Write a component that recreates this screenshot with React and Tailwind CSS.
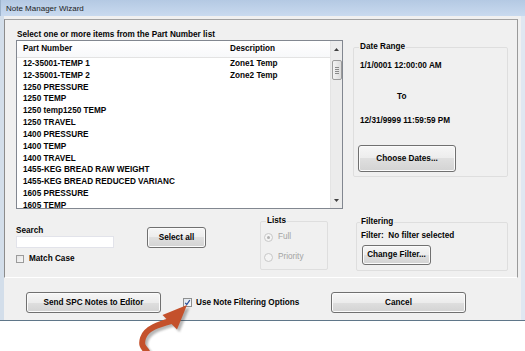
import React from "react";

const btn =
  "flex items-center justify-center border border-[#707070] rounded-[3px] bg-[linear-gradient(to_bottom,#f6f6f6_0%,#ececec_50%,#dfdfdf_50%,#d3d3d3_100%)] shadow-[inset_0_0_0_1px_#fbfbfb] font-bold text-[#050505]";

const rows = [
  ["12-35001-TEMP 1", "Zone1 Temp"],
  ["12-35001-TEMP 2", "Zone2 Temp"],
  ["1250 PRESSURE", ""],
  ["1250 TEMP", ""],
  ["1250 temp1250 TEMP", ""],
  ["1250 TRAVEL", ""],
  ["1400 PRESSURE", ""],
  ["1400 TEMP", ""],
  ["1400 TRAVEL", ""],
  ["1455-KEG BREAD RAW WEIGHT", ""],
  ["1455-KEG BREAD REDUCED VARIANC", ""],
  ["1605 PRESSURE", ""],
  ["1605 TEMP", ""],
];

function Radio({ checked }) {
  return (
    <div className="w-[9px] h-[9px] rounded-full border border-[#c8c8c8] bg-[#f4f4f4] flex items-center justify-center">
      {checked && <div className="w-[3px] h-[3px] rounded-full bg-[#b0b0b0]" />}
    </div>
  );
}

export default function App() {
  return (
    <div className="w-[525px] h-[351px] bg-white relative overflow-hidden font-['Liberation_Sans',Arial,sans-serif] text-[8.2px] leading-[10px] text-[#050505]">
      <div className="w-[525px] h-[321px] flex flex-col border-b border-[#5f7689]">
        <div className="h-[16px] shrink-0 flex items-center pl-[5px] pt-[1px] bg-[linear-gradient(to_bottom,#b4c9e3,#c9daef)] text-[8px] text-[#1b1b1b] border-l-[1px] border-[#9db3cc]">
          Note Manager Wizard
        </div>
        <div className="flex-1 flex flex-col bg-[#f0f0f0] border-l-[4px] border-l-[#d3deea] border-r-[4px] border-r-[#dfe7f1]">
          {/* main panel */}
          <div className="mt-[3px] mr-[3px] h-[259px] shrink-0 border border-t-[#a2a2a2] border-l-[#8c8c8c] border-r-[#9a9a9a] border-b-[#ffffff] flex">
            {/* left column */}
            <div className="ml-[11px] w-[327px] flex flex-col">
              <div className="mt-[10px] h-[10px] shrink-0 pl-[1px] font-bold whitespace-nowrap">Select one or more items from the Part Number list</div>
              <div className="h-[169px] shrink-0 border border-[#828790] bg-white flex overflow-hidden">
                <div className="flex-1 flex flex-col overflow-hidden">
                  <div className="h-[17px] shrink-0 flex items-center border-b border-[#e3e3e3] bg-[linear-gradient(to_bottom,#ffffff,#f7f8fa)] font-bold">
                    <div className="w-[213px] pl-[6px]">Part Number</div>
                    <div>Description</div>
                  </div>
                  {rows.map(([a, b]) => (
                    <div key={a} className="h-[11.83px] shrink-0 flex items-center font-bold">
                      <div className="w-[213px] pl-[6px] whitespace-nowrap">{a}</div>
                      <div className="whitespace-nowrap">{b}</div>
                    </div>
                  ))}
                </div>
                {/* scrollbar */}
                <div className="w-[12px] shrink-0 bg-[#ececec] border-l border-[#e4e4e4] flex flex-col items-center">
                  <div className="h-[16px] w-full flex items-center justify-center">
                    <svg width="5" height="3" viewBox="0 0 5 3"><path d="M0 3 L2.5 0 L5 3Z" fill="#404040" /></svg>
                  </div>
                  <div className="mt-[3px] w-[10px] h-[20px] border border-[#9c9c9c] rounded-[2px] bg-[linear-gradient(to_right,#f3f3f3,#dcdcdc)] flex flex-col items-center justify-center gap-[1px]">
                    <div className="w-[4px] h-px bg-[#8a8a8a]" />
                    <div className="w-[4px] h-px bg-[#8a8a8a]" />
                    <div className="w-[4px] h-px bg-[#8a8a8a]" />
                    <div className="w-[4px] h-px bg-[#8a8a8a]" />
                  </div>
                  <div className="flex-1" />
                  <div className="h-[16px] w-full flex items-center justify-center">
                    <svg width="5" height="3" viewBox="0 0 5 3"><path d="M0 0 L2.5 3 L5 0Z" fill="#404040" /></svg>
                  </div>
                </div>
              </div>
              {/* bottom controls */}
              <div className="flex">
                <div className="w-[98px] flex flex-col">
                  <div className="mt-[17px] h-[10px] font-bold">Search</div>
                  <div className="h-[12px] w-[98px] bg-white border border-[#e2e3ea]" />
                  <div className="mt-[7px] h-[8px] flex items-center">
                    <div className="w-[8px] h-[8px] border border-[#9b9b9b] bg-[linear-gradient(135deg,#e4e4e4,#f8f8f8)]" />
                    <div className="ml-[5px] font-bold">Match Case</div>
                  </div>
                </div>
                <div className={`ml-[33px] mt-[18px] w-[59px] h-[21px] ${btn}`}>Select all</div>
                <fieldset className="ml-[54px] mt-[7px] w-[68px] h-[54px] border border-[#dedede] rounded-[2px] flex flex-col">
                  <legend className="ml-[5px] px-[1px] font-bold leading-[10px]">Lists</legend>
                  <div className="mt-[6px] ml-[3px] flex items-center text-[#a3a3a3]">
                    <Radio checked />
                    <span className="ml-[5px]">Full</span>
                  </div>
                  <div className="mt-[10px] ml-[3px] flex items-center text-[#a3a3a3]">
                    <Radio />
                    <span className="ml-[5px]">Priority</span>
                  </div>
                </fieldset>
              </div>
            </div>
            {/* right column */}
            <div className="ml-[10px] w-[155px] flex flex-col">
              <fieldset className="mt-[22px] w-[155px] border border-[#dedede] rounded-[2px] pl-[6px] pb-[4px] flex flex-col">
                <legend className="-ml-[1px] px-[1px] font-bold leading-[10px]">Date Range</legend>
                <div className="mt-[9px] h-[10px] font-bold">1/1/0001 12:00:00 AM</div>
                <div className="mt-[21px] h-[10px] ml-[37px] font-bold">To</div>
                <div className="mt-[14px] h-[10px] font-bold">12/31/9999 11:59:59 PM</div>
                <div className={`mt-[19px] -ml-[2px] w-[98px] h-[27px] ${btn}`}>Choose Dates...</div>
              </fieldset>
              <fieldset className="mt-[40px] ml-[3px] w-[152px] border border-[#dedede] rounded-[2px] pl-[4px] pb-[5px] flex flex-col">
                <legend className="-ml-[1px] px-[1px] font-bold leading-[10px]">Filtering</legend>
                <div className="mt-[4px] h-[10px] font-bold whitespace-nowrap">Filter:&nbsp; No filter selected</div>
                <div className={`mt-[4px] ml-[1px] w-[69px] h-[20px] ${btn}`}>Change Filter...</div>
              </fieldset>
            </div>
          </div>
          {/* bottom buttons */}
          <div className="mt-[14px] h-[21px] flex items-center">
            <div className={`ml-[22px] w-[135px] h-[21px] ${btn}`}>Send SPC Notes to Editor</div>
            <div className="ml-[22px] w-[148px] flex items-center">
              <div className="w-[9px] h-[9px] border border-[#8e8f8f] bg-[linear-gradient(135deg,#dfe6ee,#f7f9fb)] flex items-center justify-center">
                <svg width="7" height="7" viewBox="0 0 7 7"><path d="M1.2 3.8 L2.8 5.5 L5.8 1.2" stroke="#2a4f98" strokeWidth="1.2" fill="none" /></svg>
              </div>
              <div className="ml-[4px] font-bold whitespace-nowrap">Use Note Filtering Options</div>
            </div>
            <div className={`w-[135px] h-[21px] ${btn}`}>Cancel</div>
          </div>
        </div>
      </div>
      {/* callout arrow */}
      <svg className="absolute left-[130px] top-[296px]" width="70" height="55" viewBox="0 0 70 55">
        <defs>
          <filter id="sh" x="-20%" y="-20%" width="140%" height="140%">
            <feGaussianBlur stdDeviation="1.2" />
          </filter>
        </defs>
        <g transform="translate(2.5 2.5)" opacity="0.35" filter="url(#sh)">
          <path d="M41 25 C 30 28, 16 32, 13 42 S 16 52, 18 58" stroke="#333" strokeWidth="6" fill="none" strokeLinecap="round" />
          <path d="M57 9 L47 33.5 L32.5 19 Z" fill="#333" />
        </g>
        <path d="M41 25 C 30 28, 16 32, 13 42 S 16 52, 18 58" stroke="#c4512c" strokeWidth="6" fill="none" strokeLinecap="round" />
        <path d="M57 9 L47 33.5 L32.5 19 Z" fill="#c4512c" />
      </svg>
    </div>
  );
}
